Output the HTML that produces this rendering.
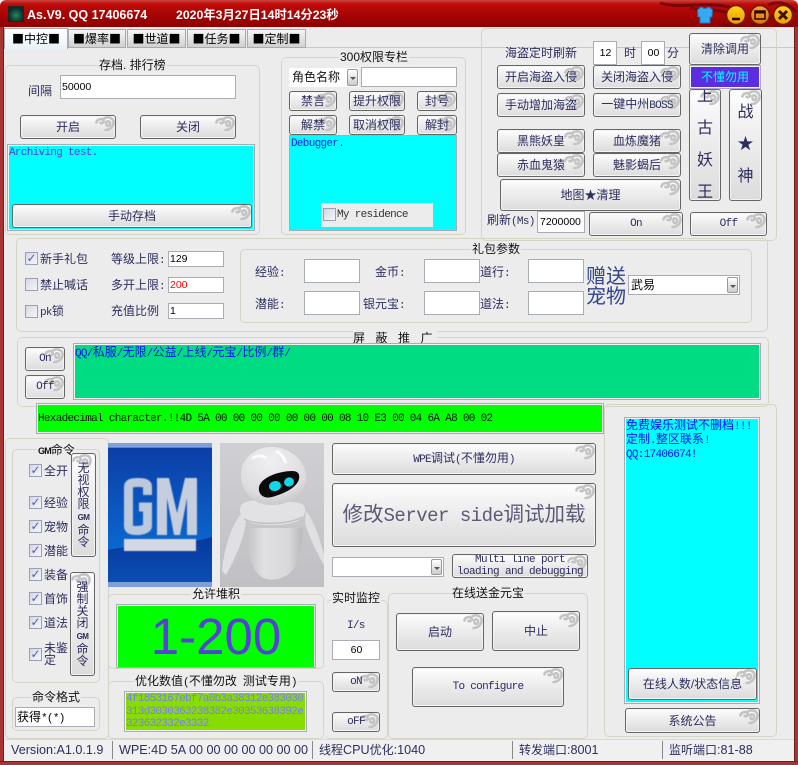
<!DOCTYPE html>
<html><head><meta charset="utf-8"><title>As.V9</title>
<style>
*{box-sizing:border-box}
html,body{margin:0;padding:0;width:798px;height:765px;overflow:hidden}
body{position:relative;background:#ececec;font:12px "Liberation Sans","WenQuanYi Zen Hei","Noto Sans CJK SC",sans-serif;color:#2d2d5f}
.a,.b,.g,.t,.i,.c,.k,.l{position:absolute}
.g{border:1px solid #d5d5c5;border-radius:5px}
.t{color:#111;background:#ececec;padding:0 1px;line-height:14px;height:14px;white-space:nowrap;text-align:center}
.b{border:1px solid #666;border-radius:3px;background:linear-gradient(#fefefe,#f0f0f0 35%,#dcdcdc);display:flex;align-items:center;justify-content:center;overflow:hidden;box-shadow:inset 0 0 0 1px #f4f4f4;white-space:nowrap;line-height:12px;color:#2d2d5f;font-size:12px}
.b svg{position:absolute;right:0;top:0;width:20px;height:16px}
.b span{position:relative}
.m,.mono,u{font-family:"Liberation Mono",monospace;font-size:11px;letter-spacing:-.7px;text-decoration:none}
.i{background:#fff;border:1px solid #a8aeb4;color:#000;line-height:14px;padding-left:1px;white-space:nowrap;overflow:hidden}
.n{font-size:10.5px}
.c{width:13px;height:13px;border:1px solid #9aa0b4;background:linear-gradient(135deg,#d4d8e4,#f6f6fa);color:#5a5ab0;font:bold 12px/11px "DejaVu Sans",sans-serif;text-align:center}
.l{line-height:14px;white-space:nowrap;font-size:12px}
.v{display:block;text-align:center;white-space:normal;line-height:1}
.dd{position:absolute;right:1px;top:1px;bottom:1px;width:11px;border:1px solid #999;border-radius:2px;background:linear-gradient(#fff,#ccc)}
.dd:after{content:"";position:absolute;left:2px;top:7px;border:3px solid transparent;border-top:3px solid #555}
.mono{line-height:12px;white-space:nowrap;position:absolute}
em{font-style:normal;font-size:12.6px}
.tab{position:absolute;top:29px;height:19px;background:linear-gradient(#f6f6f6,#d0d0d0);border:1px solid #aaa;color:#000;text-align:center;line-height:18px;font:12px/18px "WenQuanYi Zen Hei","Noto Sans CJK SC",sans-serif;white-space:nowrap}
</style></head><body>
<svg width="0" height="0" style="position:absolute"><defs>
<symbol id="sw" viewBox="0 0 20 16"><g fill="none" stroke="#c4c4c4" stroke-width="2.6" stroke-linecap="round"><path d="M1.5 6.5C2 3 7 2 8.5 4.5 9.5 6.5 7 8 5.5 6.8"/><path d="M9 2.5C12 .5 18 1 18.5 6 19 11 14 14 10.5 14"/><path d="M11 6.5C13 4 16 6 15 8.5 14 10.5 11.5 10 11.5 8.5"/></g></symbol>
<linearGradient id="yb" x1="0" y1="0" x2="0" y2="1"><stop offset="0" stop-color="#ffd21a"/><stop offset="1" stop-color="#ee9a00"/></linearGradient>
<linearGradient id="ob" x1="0" y1="0" x2="0" y2="1"><stop offset="0" stop-color="#f2a63a"/><stop offset="1" stop-color="#d8740c"/></linearGradient>
</defs></svg>

<!-- Title bar -->
<div class="a" style="left:0;top:0;width:798px;height:27px;background:linear-gradient(#c9463f 0,#c20a0a 4px,#a80404 14px,#8d0202 27px);border-radius:6px 6px 0 0"></div>
<svg class="a" style="left:640px;top:0" width="158" height="27"><g fill="none" stroke="#7a0408" stroke-width="3"><path d="M20 3C40 9 60 2 84 6 96 8 100 14 92 16M50 8C66 12 80 8 88 14"/><path d="M82 24C96 30 130 28 140 6"/><path d="M128 5C140 0 150 4 156 12"/></g></svg>
<div class="a" style="left:8px;top:6px;width:16px;height:16px;background:radial-gradient(circle at 50% 60%,#1f8a5a,#0b2a2a 70%);border:1px solid #222"></div>
<div class="a" style="left:27px;top:7px;font:bold 12.5px/16px 'Liberation Sans',sans-serif;color:#fff;white-space:nowrap">As.V9. QQ 17406674</div>
<div class="a" style="left:176px;top:7px;font:bold 12.3px/16px 'Liberation Sans','Noto Sans CJK SC',sans-serif;color:#fff;white-space:nowrap">2020年3月27日14时14分23秒</div>
<svg class="a" style="left:696px;top:6px" width="18" height="18"><path d="M5 1L8 2.5H10L13 1 16.5 4 16 11H14V17H4V11H2L1.5 4Z" fill="#38a8f0" stroke="#1b78c4"/></svg>
<svg class="a" style="left:725px;top:3px" width="70" height="22">
<circle cx="11" cy="12" r="9.5" fill="url(#yb)" stroke="#6a1a00" stroke-width="1.5"/><path d="M7 16h8" stroke="#300" stroke-width="2.5"/>
<circle cx="35" cy="12" r="9.5" fill="url(#ob)" stroke="#6a1a00" stroke-width="1.5"/><path d="M30 8h10v8H30z" fill="none" stroke="#300" stroke-width="1.5"/><path d="M30 9.5h10" stroke="#300" stroke-width="2"/>
<circle cx="58" cy="12" r="9.5" fill="url(#yb)" stroke="#6a1a00" stroke-width="1.5"/><path d="M54 8l8 8M62 8l-8 8" stroke="#401000" stroke-width="3"/>
</svg>

<!-- window borders -->
<div class="a" style="left:0;top:27px;width:4px;height:738px;background:#a83434;border-right:1px solid #6d2020"></div>
<div class="a" style="right:0;top:27px;width:4px;height:738px;background:#a83434;border-left:1px solid #6d2020"></div>
<div class="a" style="left:0;top:761px;width:798px;height:4px;background:#a83434;border-top:1px solid #6d2020"></div>

<!-- Tabs -->
<div class="a" style="left:305px;top:47px;width:489px;height:1px;background:#c8c8c8"></div>
<div class="tab" style="left:4px;top:28px;width:64px;height:21px;background:linear-gradient(#fff,#e8f2fa);border-bottom:0;line-height:20px">■中控■</div>
<div class="tab" style="left:68px;width:58px">■爆率■</div>
<div class="tab" style="left:127px;width:59px">■世道■</div>
<div class="tab" style="left:187px;width:59px">■任务■</div>
<div class="tab" style="left:247px;width:59px">■定制■</div>

<!-- 存档 -->
<div class="g" style="left:5px;top:65px;width:255px;height:170px"></div>
<div class="t" style="left:98px;top:58px">存档. 排行榜</div>
<div class="l" style="left:28px;top:84px">间隔</div>
<div class="i n" style="left:60px;top:75px;width:176px;height:24px;line-height:22px">50000</div>
<div class="b" style="left:20px;top:115px;width:96px;height:24px"><svg><use href="#sw"/></svg><span>开启</span></div>
<div class="b" style="left:140px;top:115px;width:96px;height:24px"><svg><use href="#sw"/></svg><span>关闭</span></div>
<div class="a" style="left:7px;top:144px;width:248px;height:87px;background:#0ff;border:2px solid #f4f4f4;outline:1px solid #aab;outline-offset:-1px"></div>
<div class="mono" style="left:9px;top:147px;color:#5a32e0">Archiving test.</div>
<div class="b" style="left:12px;top:204px;width:240px;height:24px"><svg><use href="#sw"/></svg><span>手动存档</span></div>

<!-- 300权限 -->
<div class="g" style="left:281px;top:57px;width:185px;height:178px"></div>
<div class="t" style="left:339px;top:50px">300权限专栏</div>
<div class="a" style="left:289px;top:68px;width:70px;height:19px;background:#fff"><span class="a" style="left:3px;top:2px;line-height:14px;color:#111;white-space:nowrap">角色名称</span><div class="dd"></div></div>
<div class="i" style="left:361px;top:67px;width:96px;height:20px"></div>
<div class="b" style="left:289px;top:91px;width:48px;height:20px"><svg><use href="#sw"/></svg><span>禁言</span></div>
<div class="b" style="left:349px;top:91px;width:56px;height:20px"><svg><use href="#sw"/></svg><span>提升权限</span></div>
<div class="b" style="left:417px;top:91px;width:40px;height:20px"><svg><use href="#sw"/></svg><span>封号</span></div>
<div class="b" style="left:289px;top:115px;width:48px;height:20px"><svg><use href="#sw"/></svg><span>解禁</span></div>
<div class="b" style="left:349px;top:115px;width:56px;height:20px"><svg><use href="#sw"/></svg><span>取消权限</span></div>
<div class="b" style="left:417px;top:115px;width:40px;height:20px"><svg><use href="#sw"/></svg><span>解封</span></div>
<div class="a" style="left:289px;top:135px;width:168px;height:96px;background:#0ff;border:1px solid #aab"></div>
<div class="mono" style="left:291px;top:138px;color:#2020e8">Debugger.</div>
<div class="a" style="left:321px;top:203px;width:112px;height:24px;background:#ececec"></div>
<div class="c" style="left:323px;top:208px"></div>
<div class="mono" style="left:337px;top:209px;color:#333">My residence</div>

<!-- 海盗 -->
<div class="g" style="left:481px;top:28px;width:296px;height:213px"></div>
<div class="a" style="left:466px;top:47px;width:15px;height:1px;background:#c8c8c8"></div>
<div class="l" style="left:505px;top:46px">海盗定时刷新</div>
<div class="i n" style="left:593px;top:41px;width:24px;height:24px;line-height:22px;text-align:center">12</div>
<div class="l" style="left:624px;top:46px">时</div>
<div class="i n" style="left:641px;top:41px;width:24px;height:24px;line-height:22px;text-align:center">00</div>
<div class="l" style="left:667px;top:46px">分</div>
<div class="b" style="left:497px;top:65px;width:88px;height:24px"><svg><use href="#sw"/></svg><span>开启海盗入侵</span></div>
<div class="b" style="left:593px;top:65px;width:88px;height:24px"><svg><use href="#sw"/></svg><span>关闭海盗入侵</span></div>
<div class="b" style="left:497px;top:93px;width:88px;height:24px"><svg><use href="#sw"/></svg><span>手动增加海盗</span></div>
<div class="b" style="left:593px;top:93px;width:88px;height:24px"><svg><use href="#sw"/></svg><span>一键中州<u>BOSS</u></span></div>
<div class="b" style="left:497px;top:129px;width:88px;height:24px"><svg><use href="#sw"/></svg><span>黑熊妖皇</span></div>
<div class="b" style="left:593px;top:129px;width:88px;height:24px"><svg><use href="#sw"/></svg><span>血炼魔猪</span></div>
<div class="b" style="left:497px;top:153px;width:88px;height:24px"><svg><use href="#sw"/></svg><span>赤血鬼猿</span></div>
<div class="b" style="left:593px;top:153px;width:88px;height:24px"><svg><use href="#sw"/></svg><span>魅影蝎后</span></div>
<div class="b" style="left:500px;top:179px;width:181px;height:32px"><svg><use href="#sw"/></svg><span>地图★清理</span></div>
<div class="l" style="left:487px;top:213px">刷新<u>(Ms)</u></div>
<div class="i n" style="left:537px;top:211px;width:48px;height:22px;line-height:20px;padding-left:2px">7200000</div>
<div class="b m" style="left:589px;top:212px;width:94px;height:24px"><svg><use href="#sw"/></svg><span>On</span></div>
<div class="b m" style="left:690px;top:212px;width:77px;height:24px"><svg><use href="#sw"/></svg><span>Off</span></div>
<div class="b" style="left:689px;top:33px;width:72px;height:32px"><svg><use href="#sw"/></svg><span>清除调用</span></div>
<div class="a" style="left:689px;top:65px;width:72px;height:24px;background:#5a2ee0;border:2px solid #f4f4f4;outline:1px solid #aab;outline-offset:-1px;color:#0ff;text-align:center;line-height:20px">不懂勿用</div>
<div class="b" style="left:689px;top:89px;width:32px;height:112px;display:block;font-size:16px"><svg><use href="#sw"/></svg><span class="v" style="position:absolute;left:0;right:0;top:-9px;line-height:32px">上<br>古<br>妖<br>王</span></div>
<div class="b" style="left:729px;top:89px;width:33px;height:112px;font-size:16px"><svg><use href="#sw"/></svg><span class="v" style="line-height:32px">战<br>★<br>神</span></div>

<!-- row 2 -->
<div class="g" style="left:16px;top:238px;width:752px;height:94px"></div>
<div class="c" style="left:25px;top:252px">✓</div><div class="l" style="left:40px;top:252px">新手礼包</div>
<div class="c" style="left:25px;top:278px"></div><div class="l" style="left:40px;top:278px">禁止喊话</div>
<div class="c" style="left:25px;top:305px"></div><div class="l" style="left:40px;top:304px"><u>pk</u>锁</div>
<div class="l" style="left:111px;top:252px">等级上限<u>:</u></div>
<div class="i n" style="left:168px;top:251px;width:56px;height:16px">129</div>
<div class="l" style="left:111px;top:278px">多开上限<u>:</u></div>
<div class="i n" style="left:168px;top:277px;width:56px;height:16px;color:#f00">200</div>
<div class="l" style="left:111px;top:304px">充值比例</div>
<div class="i n" style="left:168px;top:303px;width:56px;height:16px">1</div>

<div class="g" style="left:240px;top:249px;width:512px;height:74px"></div>
<div class="t" style="left:471px;top:242px">礼包参数</div>
<div class="l" style="left:255px;top:265px">经验<u>:</u></div><div class="i" style="left:304px;top:259px;width:56px;height:24px"></div>
<div class="l" style="left:375px;top:265px">金币<u>:</u></div><div class="i" style="left:424px;top:259px;width:56px;height:24px"></div>
<div class="l" style="left:480px;top:265px">道行<u>:</u></div><div class="i" style="left:528px;top:259px;width:56px;height:24px"></div>
<div class="l" style="left:255px;top:297px">潜能<u>:</u></div><div class="i" style="left:304px;top:291px;width:56px;height:24px"></div>
<div class="l" style="left:363px;top:297px">银元宝<u>:</u></div><div class="i" style="left:424px;top:291px;width:56px;height:24px"></div>
<div class="l" style="left:480px;top:297px">道法<u>:</u></div><div class="i" style="left:528px;top:291px;width:56px;height:24px"></div>
<div class="a" style="left:586px;top:267px;width:42px;font-size:20px;line-height:20px;color:#33448a;text-align:left">赠送<br>宠物</div>
<div class="i" style="left:628px;top:275px;width:112px;height:20px;line-height:18px;padding-left:2px">武易<div class="dd"></div></div>

<!-- 屏蔽推广 -->
<div class="g" style="left:17px;top:337px;width:752px;height:70px"></div>
<div class="t" style="left:353px;top:331px;letter-spacing:10.5px;text-align:left;width:84px;padding:0">屏蔽推广</div>
<div class="b m" style="left:25px;top:347px;width:40px;height:24px"><svg><use href="#sw"/></svg><span>On</span></div>
<div class="b m" style="left:25px;top:375px;width:40px;height:24px"><svg><use href="#sw"/></svg><span>Off</span></div>
<div class="a" style="left:73px;top:343px;width:688px;height:57px;background:#00dc82;border:2px solid #f4f4f4;outline:1px solid #aab;outline-offset:-1px"></div>
<div class="l" style="left:75px;top:345px;color:#1010f0"><u>QQ/</u>私服<u>/</u>无限<u>/</u>公益<u>/</u>上线<u>/</u>元宝<u>/</u>比例<u>/</u>群<u>/</u></div>

<!-- hex -->
<div class="a" style="left:36px;top:403px;width:568px;height:31px;background:#0f0;border:2px solid #f0f0f0;outline:1px solid #aab;outline-offset:-1px"></div>
<div class="mono" style="left:38px;top:413px;color:#111">Hexadecimal character.!!4D 5A 00 00 00 00 00 00 00 08 10 E3 00 04 6A A8 00 02</div>

<!-- right -->
<div class="g" style="left:604px;top:404px;width:173px;height:333px"></div>
<div class="a" style="left:624px;top:417px;width:136px;height:287px;background:#0ff;border:2px solid #f4f4f4;outline:1px solid #aab;outline-offset:-1px"></div>
<div class="a" style="left:626px;top:419px;width:132px;line-height:12px;color:#1010f0;white-space:nowrap">免费娱乐测试不删档<u>!!!</u><br>定制<u>.</u>整区联系<u>!</u><br><u>QQ:17406674!</u></div>
<div class="b" style="left:628px;top:668px;width:129px;height:32px"><svg><use href="#sw"/></svg><span>在线人数/状态信息</span></div>
<div class="b" style="left:625px;top:708px;width:135px;height:25px"><svg><use href="#sw"/></svg><span>系统公告</span></div>

<!-- GM -->
<div class="g" style="left:5px;top:438px;width:104px;height:301px"></div>
<div class="g" style="left:12px;top:449px;width:88px;height:234px"></div>
<div class="t" style="left:37px;top:443px"><span style="font-size:9px;font-weight:bold;letter-spacing:-.8px">GM</span>命令</div>
<div class="c" style="left:29px;top:464px">✓</div><div class="l" style="left:44px;top:464px">全开</div>
<div class="c" style="left:29px;top:496px">✓</div><div class="l" style="left:44px;top:496px">经验</div>
<div class="c" style="left:29px;top:520px">✓</div><div class="l" style="left:44px;top:520px">宠物</div>
<div class="c" style="left:29px;top:544px">✓</div><div class="l" style="left:44px;top:544px">潜能</div>
<div class="c" style="left:29px;top:568px">✓</div><div class="l" style="left:44px;top:568px">装备</div>
<div class="c" style="left:29px;top:592px">✓</div><div class="l" style="left:44px;top:592px">首饰</div>
<div class="c" style="left:29px;top:616px">✓</div><div class="l" style="left:44px;top:616px">道法</div>
<div class="c" style="left:29px;top:648px">✓</div><div class="l" style="left:44px;top:642px;line-height:12px">未鉴<br>定</div>
<div class="b" style="left:71px;top:453px;width:25px;height:104px"><svg style="right:3px"><use href="#sw"/></svg><span class="v" style="font-size:12px;line-height:12px;width:14px">无<br>视<br>权<br>限<br><span style="font-size:8px;font-weight:bold;letter-spacing:-.6px">GM</span><br>命<br>令</span></div>
<div class="b" style="left:70px;top:572px;width:25px;height:104px"><svg style="right:3px"><use href="#sw"/></svg><span class="v" style="font-size:12px;line-height:12px;width:14px">强<br>制<br>关<br>闭<br><span style="font-size:8px;font-weight:bold;letter-spacing:-.6px">GM</span><br>命<br>令</span></div>
<div class="g" style="left:12px;top:697px;width:88px;height:34px"></div>
<div class="t" style="left:31px;top:690px">命令格式</div>
<div class="i" style="left:15px;top:707px;width:80px;height:20px;line-height:18px">获得<u>*(*)</u></div>

<!-- GM image -->
<svg class="a" style="left:108px;top:443px" width="104" height="144" viewBox="0 0 104 144">
<defs><linearGradient id="gb" x1="0" y1="0" x2="0" y2="1"><stop offset="0" stop-color="#7fa0d8"/><stop offset=".03" stop-color="#7fa0d8"/><stop offset=".035" stop-color="#0b3ea6"/><stop offset=".75" stop-color="#0a68d0"/></linearGradient>
<linearGradient id="gl" x1="0" y1="0" x2="0" y2="1"><stop offset="0" stop-color="#06399e"/><stop offset=".9" stop-color="#0c4eb2"/><stop offset=".9" stop-color="#7fa0d8"/></linearGradient>
<filter id="bl"><feGaussianBlur stdDeviation=".5"/></filter></defs>
<rect width="104" height="144" fill="url(#gb)"/>
<path d="M0 107C30 100 70 104 104 94V144H0Z" fill="url(#gl)"/>
<g filter="url(#bl)">
<path d="M39.5 52V44C39.5 40.5 37 39.5 30 39.5 23 39.5 20.5 40.500 20.500 44V83C20.500 86.500 23 87.500 29 87.500 34 87.500 39.500 86 39.500 83V64H31" fill="none" stroke="#bcc8dc" stroke-width="9"/>
<path d="M49 35H61L69 70 77 35H89V92H79V55L72 92H66L59 55V92H49Z" fill="#c4cedf"/>
<rect x="16" y="96" width="72" height="12" fill="#d4d8e2"/>
</g>
</svg>

<!-- Robot -->
<svg class="a" style="left:220px;top:443px" width="104" height="144" viewBox="0 0 104 144">
<defs><linearGradient id="rb" x1="0" y1="0" x2="0" y2="1"><stop offset="0" stop-color="#d0d0d4"/><stop offset="1" stop-color="#c0c0c4"/></linearGradient>
<linearGradient id="rs" x1="0" y1="0" x2="1" y2="0"><stop offset="0" stop-color="#c4c4c6"/><stop offset=".3" stop-color="#e0e0e2"/><stop offset=".75" stop-color="#d8d8da"/><stop offset="1" stop-color="#b8b8ba"/></linearGradient>
<radialGradient id="rh" cx=".45" cy=".25" r=".85"><stop offset="0" stop-color="#f0f0f2"/><stop offset=".7" stop-color="#dcdcde"/><stop offset="1" stop-color="#bcbcbe"/></radialGradient></defs>
<rect width="104" height="144" fill="url(#rb)"/>
<path d="M2 128C4 105 12 82 20 72 25 68 27 71 26 78 24 96 14 118 6 132Z" fill="#e0e0e2"/>
<path d="M86 68C93 76 100 96 104 112V122C98 112 90 96 85 80Z" fill="#e0e0e2"/>
<path d="M27 85C27 100 28 122 40 133 50 140 64 136 72 128 80 118 82 100 83 85Z" fill="url(#rs)"/>
<path d="M20 66C21 58 30 56 52 58 72 59 85 58 85 66 86 76 76 82 52 82 30 82 20 78 20 66Z" fill="#e2e2e4"/>
<path d="M24 76C36 82 68 82 82 74" stroke="#c0c0c2" stroke-width="1.500" fill="none"/>
<path d="M21 32C21 14 36 4 52 4 70 4 86 18 86 34 86 50 72 62 52 62 34 62 21 50 21 32Z" fill="url(#rh)"/>
<path d="M39 44C41 34 60 28 72 28 78 28 80 31 79 36 77 44 66 50 52 54 44 56 38 52 39 44Z" fill="#0a0a0a"/>
<ellipse cx="55" cy="43" rx="6" ry="5" fill="#10d8e8" transform="rotate(-12 55 43)"/>
<ellipse cx="69" cy="39" rx="5" ry="4.500" fill="#10d8e8" transform="rotate(-20 69 39)"/>
<path d="M32 16C36 12 42 12 46 15M56 8C60 10 64 14 66 20" stroke="#fff" stroke-width="3" fill="none" opacity=".8"/>
</svg>

<!-- 允许堆积 -->
<div class="g" style="left:108px;top:594px;width:216px;height:75px"></div>
<div class="t" style="left:191px;top:587px">允许堆积</div>
<div class="a" style="left:116px;top:604px;width:200px;height:64px;background:#0f0;border:2px solid #f4f4f4;border-bottom:0;outline:1px solid #aab;outline-offset:-1px;color:#5a3edc;font-size:51px;line-height:62px;text-align:center">1-200</div>
<div class="g" style="left:108px;top:681px;width:216px;height:58px"></div>
<div class="t" style="left:134px;top:674px">优化数值<u>(</u>不懂勿改<u> </u>测试专用<u>)</u></div>
<div class="a" style="left:124px;top:691px;width:183px;height:41px;background:#88dd00;border:2px solid #f4f4f4;outline:1px solid #aab;outline-offset:-1px"></div>
<div class="mono" style="left:126px;top:693px;color:#7a7aff;line-height:12.5px">4f1853167ebf7a0b3a38312e383030<br>313d3030363238382e30353638392e<br>323632332e3332</div>

<!-- middle -->
<div class="b" style="left:332px;top:443px;width:264px;height:32px"><svg><use href="#sw"/></svg><span><u>WPE</u>调试<u>(</u>不懂勿用<u>)</u></span></div>
<div class="b" style="left:332px;top:483px;width:264px;height:64px;font-size:20.5px;line-height:24px;color:#5a5a78"><svg><use href="#sw"/></svg><span>修改<u style="font-size:19px;letter-spacing:-.5px">Server side</u>调试加载</span></div>
<div class="i" style="left:332px;top:557px;width:112px;height:20px"><div class="dd"></div></div>
<div class="b m" style="left:452px;top:554px;width:136px;height:24px;line-height:12px;text-align:center;letter-spacing:-.6px"><svg><use href="#sw"/></svg><span>Multi line port<br>loading and debugging</span></div>

<div class="g" style="left:325px;top:600px;width:63px;height:139px;border-left:0"></div>
<div class="t" style="left:331px;top:591px">实时监控</div>
<div class="mono" style="left:347px;top:620px;color:#2d2d5f">I/s</div>
<div class="i n" style="left:332px;top:640px;width:48px;height:20px;line-height:18px;text-align:center">60</div>
<div class="b m" style="left:332px;top:672px;width:48px;height:20px"><svg><use href="#sw"/></svg><span>oN</span></div>
<div class="b m" style="left:332px;top:712px;width:48px;height:20px"><svg><use href="#sw"/></svg><span>oFF</span></div>

<div class="g" style="left:388px;top:593px;width:200px;height:146px"></div>
<div class="t" style="left:451px;top:586px">在线送金元宝</div>
<div class="b" style="left:396px;top:613px;width:88px;height:38px"><svg><use href="#sw"/></svg><span>启动</span></div>
<div class="b" style="left:492px;top:611px;width:88px;height:40px"><svg><use href="#sw"/></svg><span>中止</span></div>
<div class="b m" style="left:412px;top:667px;width:152px;height:40px"><svg><use href="#sw"/></svg><span>To configure</span></div>

<!-- status -->
<div class="a" style="left:4px;top:739px;width:790px;height:22px;background:#f0f0f0;border-top:1px solid #d8d8d8"></div>
<div class="l" style="left:11px;top:743px"><em>Version:A1.0.1.9</em></div>
<div class="l" style="left:119px;top:743px"><em>WPE:4D 5A 00 00 00 00 00 00 00</em></div>
<div class="l" style="left:319px;top:743px">线程<em>CPU</em>优化<em>:1040</em></div>
<div class="l" style="left:519px;top:743px">转发端口<em>:8001</em></div>
<div class="l" style="left:669px;top:743px">监听端口<em>:81-88</em></div>
<div class="a" style="left:112px;top:741px;width:1px;height:18px;background:#888"></div>
<div class="a" style="left:312px;top:741px;width:1px;height:18px;background:#888"></div>
<div class="a" style="left:512px;top:741px;width:1px;height:18px;background:#888"></div>
<div class="a" style="left:662px;top:741px;width:1px;height:18px;background:#888"></div>
</body></html>
